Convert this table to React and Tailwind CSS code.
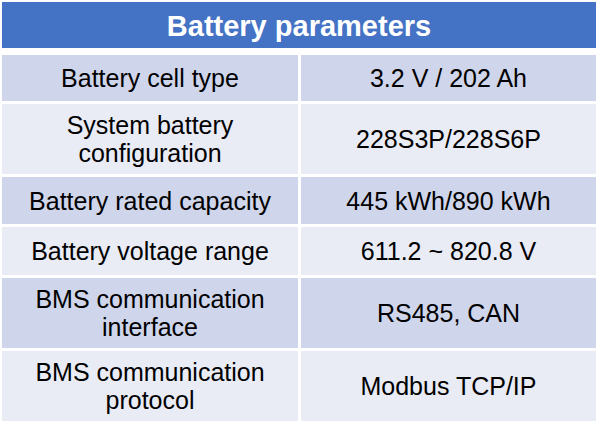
export default function App() {
  const rows = [
    { l: ["Battery cell type"], r: "3.2 V / 202 Ah", h: "h-[46px]", dark: true },
    { l: ["System battery", "configuration"], r: "228S3P/228S6P", h: "h-[70px]", dark: false },
    { l: ["Battery rated capacity"], r: "445 kWh/890 kWh", h: "h-[47px]", dark: true },
    { l: ["Battery voltage range"], r: "611.2 ~ 820.8 V", h: "h-[48px]", dark: false },
    { l: ["BMS communication", "interface"], r: "RS485, CAN", h: "h-[70px]", dark: true },
    { l: ["BMS communication", "protocol"], r: "Modbus TCP/IP", h: "h-[70px]", dark: false },
  ];
  return (
    <div className="w-[602px] h-[431px] bg-white pt-[2px] pl-[2px] font-['Liberation_Sans',Arial,sans-serif] text-black">
      <div className="w-[594px] h-[46px] bg-[#4472C4] flex items-center justify-center text-white font-bold text-[29px] leading-none pt-[2px]">
        Battery parameters
      </div>
      <div className="mt-[7px] grid grid-cols-[296px_295px] gap-[3px]">
        {rows.map((row, i) => {
          const bg = row.dark ? "bg-[#CFD5EA]" : "bg-[#E9EBF5]";
          return [
            <div key={i + "l"} className={`${row.h} ${bg} flex flex-col items-center justify-center text-[25px] leading-[28px] text-center`}>
              {row.l.map((t, j) => (
                <div key={j}>{t}</div>
              ))}
            </div>,
            <div key={i + "r"} className={`${row.h} ${bg} flex items-center justify-center text-[25px] leading-[28px]`}>
              {row.r}
            </div>,
          ];
        })}
      </div>
    </div>
  );
}
